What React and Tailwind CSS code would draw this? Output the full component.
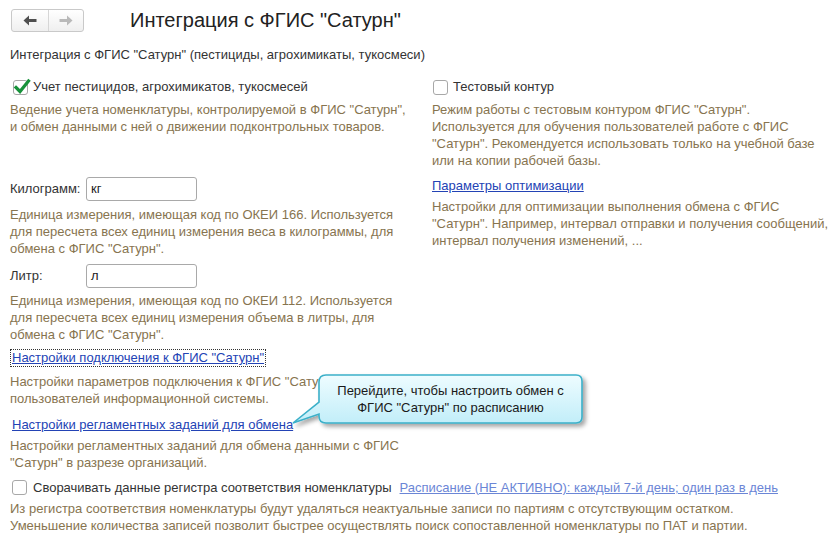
import React from "react";

const Desc = ({ lines, className = "" }) => (
  <div className={"text-[#87744f] leading-[17px] whitespace-nowrap " + className}>
    {lines.map((l, i) => (
      <div key={i}>{l}</div>
    ))}
  </div>
);

const CheckBox = ({ checked }) => (
  <div className="relative w-[15px] h-[15px] shrink-0 rounded-[3px] border border-[#a8a8a8] bg-white">
    {checked && (
      <svg className="absolute -left-[1px] -top-[3px]" width="18" height="18" viewBox="0 0 18 18">
        <path d="M3 9.5 L7 13.5 L15.5 3" fill="none" stroke="#17923a" strokeWidth="3.2" strokeLinecap="square" />
      </svg>
    )}
  </div>
);

const Arrow = ({ dir, color }) => (
  <svg width="14" height="11" viewBox="0 0 14 11">
    {dir === "left" ? (
      <>
        <path d="M0.5 5.5 L6 0.5 L6 10.5 Z" fill={color} />
        <rect x="5" y="4" width="8.5" height="3" fill={color} />
      </>
    ) : (
      <>
        <path d="M13.5 5.5 L8 0.5 L8 10.5 Z" fill={color} />
        <rect x="0.5" y="4" width="8.5" height="3" fill={color} />
      </>
    )}
  </svg>
);

export default function App() {
  return (
    <div
      className="relative w-[830px] h-[543px] bg-white text-[13px] text-[#3a3a3a] overflow-hidden"
      style={{ fontFamily: '"Liberation Sans", Arial, sans-serif' }}
    >
      {/* Header */}
      <div className="flex items-center pt-[9px] pl-[11px]">
        <div className="flex h-[23px] w-[73px] rounded-[3px] border border-[#c9c9c9] bg-gradient-to-b from-white to-[#efefef]">
          <div className="flex w-[37px] items-center justify-center border-r border-[#d6d6d6]">
            <Arrow dir="left" color="#4f4f4f" />
          </div>
          <div className="flex flex-1 items-center justify-center">
            <Arrow dir="right" color="#b9b9b9" />
          </div>
        </div>
        <div className="ml-[46px] text-[20px] leading-[23px] text-[#222]">
          Интеграция с ФГИС "Сатурн"
        </div>
      </div>

      <div className="pl-[10px]">
        <div className="mt-[14px] leading-[17px] text-[#333]">
          Интеграция с ФГИС "Сатурн" (пестициды, агрохимикаты, тукосмеси)
        </div>

        <div className="flex mt-[15px]">
          {/* Left column */}
          <div className="w-[422px] shrink-0">
            <div className="flex items-center h-[18px] pl-[3px]">
              <CheckBox checked />
              <span className="ml-[5px] text-[#333]">Учет пестицидов, агрохимикатов, тукосмесей</span>
            </div>
            <Desc
              className="mt-[5px]"
              lines={[
                'Ведение учета номенклатуры, контролируемой в ФГИС "Сатурн",',
                "и обмен данными с ней о движении подконтрольных товаров.",
              ]}
            />

            <div className="flex items-center mt-[42px] h-[24px]">
              <span className="w-[76px] text-[#333]">Килограмм:</span>
              <div className="flex items-center w-[111px] h-[24px] rounded-[3px] border border-[#a9a9a9] px-[4px] text-[#222]">
                кг
              </div>
            </div>
            <Desc
              className="mt-[5px]"
              lines={[
                "Единица измерения, имеющая код по ОКЕИ 166. Используется",
                "для пересчета всех единиц измерения веса в килограммы, для",
                'обмена с ФГИС "Сатурн".',
              ]}
            />

            <div className="flex items-center mt-[7px] h-[24px]">
              <span className="w-[76px] text-[#333]">Литр:</span>
              <div className="flex items-center w-[111px] h-[24px] rounded-[3px] border border-[#a9a9a9] px-[4px] text-[#222]">
                л
              </div>
            </div>
            <Desc
              className="mt-[4px]"
              lines={[
                "Единица измерения, имеющая код по ОКЕИ 112. Используется",
                "для пересчета всех единиц измерения объема в литры, для",
                'обмена с ФГИС "Сатурн".',
              ]}
            />

            <div className="mt-[5px]">
              <span className="inline-block border border-dotted border-[#333] px-[1px] leading-[16px] text-[#2343b5] underline">
                Настройки подключения к ФГИС "Сатурн"
              </span>
            </div>
            <Desc
              className="mt-[5px]"
              lines={[
                'Настройки параметров подключения к ФГИС "Сатурн" для',
                "пользователей информационной системы.",
              ]}
            />

            <div className="mt-[9px] pl-[2px] leading-[17px]">
              <span className="text-[#2343b5] underline">Настройки регламентных заданий для обмена</span>
            </div>
            <Desc
              className="mt-[4px]"
              lines={[
                'Настройки регламентных заданий для обмена данными с ФГИС',
                '"Сатурн" в разрезе организаций.',
              ]}
            />
          </div>

          {/* Right column */}
          <div className="flex-1">
            <div className="flex items-center h-[18px] pl-[1px]">
              <CheckBox />
              <span className="ml-[5px] text-[#333]">Тестовый контур</span>
            </div>
            <Desc
              className="mt-[5px] leading-[16.5px]"
              lines={[
                'Режим работы с тестовым контуром ФГИС "Сатурн".',
                "Используется для обучения пользователей работе с ФГИС",
                '"Сатурн". Рекомендуется использовать только на учебной базе',
                "или на копии рабочей базы.",
              ]}
            />
            <div className="mt-[8px] leading-[17px]">
              <span className="text-[#2343b5] underline">Параметры оптимизации</span>
            </div>
            <Desc
              className="mt-[4px]"
              lines={[
                "Настройки для оптимизации выполнения обмена с ФГИС",
                '"Сатурн". Например, интервал отправки и получения сообщений,',
                "интервал получения изменений, ...",
              ]}
            />
          </div>
        </div>

        {/* Bottom */}
        <div className="flex items-center h-[18px] mt-[8px] pl-[2px]">
          <CheckBox />
          <span className="ml-[6px] text-[#333]">Сворачивать данные регистра соответствия номенклатуры</span>
          <span className="ml-[8px] text-[#6b86d6] underline">
            Расписание (НЕ АКТИВНО): каждый 7-й день; один раз в день
          </span>
        </div>
        <Desc
          className="mt-[3px]"
          lines={[
            "Из регистра соответствия номенклатуры будут удаляться неактуальные записи по партиям с отсутствующим остатком.",
            "Уменьшение количества записей позволит быстрее осуществлять поиск сопоставленной номенклатуры по ПАТ и партии.",
          ]}
        />
      </div>

      {/* Callout */}
      <div className="absolute left-[288px] top-[369px] w-[305px] h-[65px]">
        <svg width="305" height="65" viewBox="0 0 305 65" className="absolute left-0 top-0">
          <defs>
            <linearGradient id="cg" x1="0" y1="0" x2="0" y2="1">
              <stop offset="0" stopColor="#eefcff" />
              <stop offset="1" stopColor="#c2eef9" />
            </linearGradient>
            <filter id="sh" x="-10%" y="-20%" width="130%" height="160%">
              <feDropShadow dx="3" dy="3" stdDeviation="2" floodColor="#000" floodOpacity="0.35" />
            </filter>
          </defs>
          <path
            d="M38 6 H288 Q294 6 294 12 V48 Q294 54 288 54 H38 Q31 54 31 47 V45 L5 54 L31 33 V13 Q31 6 38 6 Z"
            fill="url(#cg)"
            stroke="#3bb0c9"
            strokeWidth="1.6"
            filter="url(#sh)"
          />
        </svg>
        <div className="absolute left-[31px] top-[6px] w-[263px] h-[48px] flex flex-col items-center justify-center text-center leading-[17px] text-[#1a1a1a]">
          <div>Перейдите, чтобы настроить обмен с</div>
          <div>ФГИС "Сатурн" по расписанию</div>
        </div>
      </div>
    </div>
  );
}
